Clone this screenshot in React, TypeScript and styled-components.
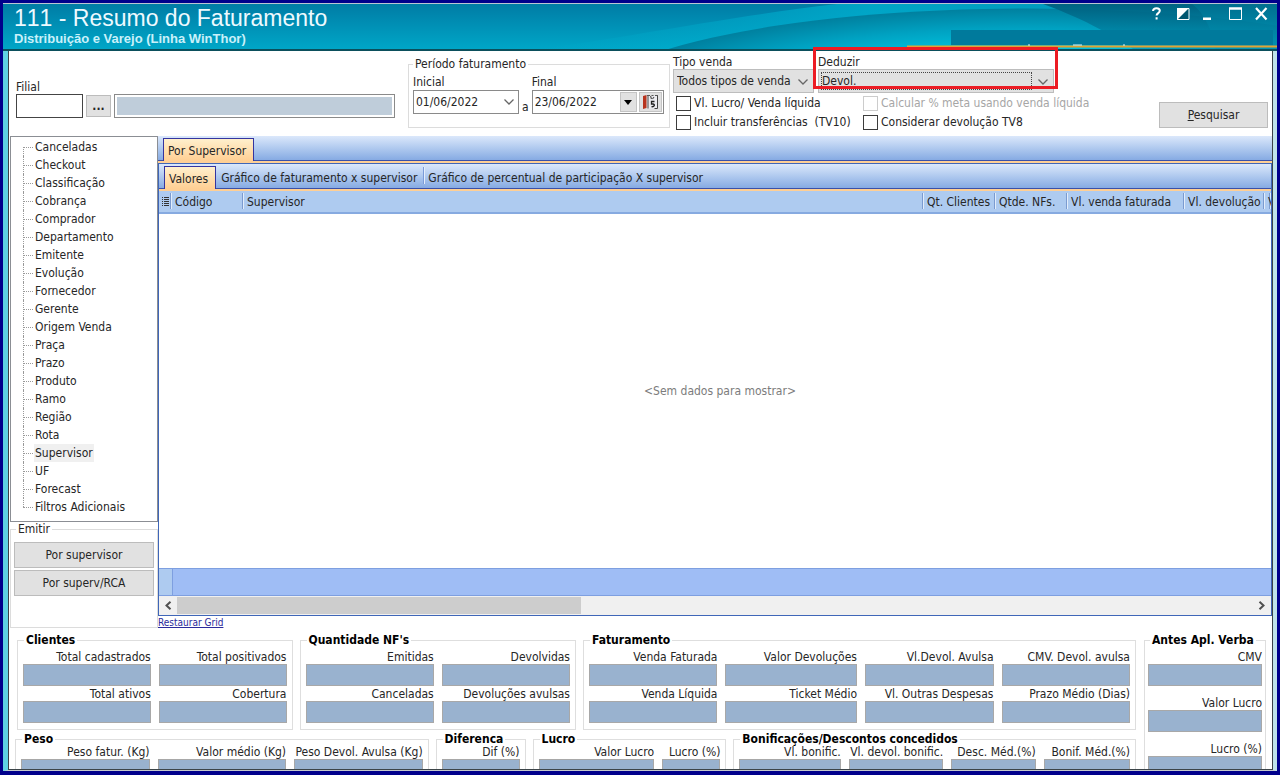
import React from "react";
import styled, { createGlobalStyle, css } from "styled-components";

const GlobalStyle = createGlobalStyle`
  *, *::before, *::after { box-sizing: border-box; }
  html, body, #root { height: 100%; }
  body {
    margin: 0;
    background: #00008b;
    color: #262626;
    font-family: "DejaVu Sans Condensed", "DejaVu Sans", "Noto Sans", sans-serif;
    font-size: 12px;
    line-height: 14px;
  }
  button, input, select { font: inherit; color: inherit; border-radius: 0; }
  fieldset { min-width: 0; margin: 0; }
`;

const Frame = styled.div`
  display: flex;
  flex-direction: column;
  height: 100vh;
  min-height: 600px;
  border: 3px solid #00008b;
  border-bottom-width: 4px;
  overflow: hidden;
`;

const Header = styled.header`
  position: relative;
  display: flex;
  justify-content: space-between;
  flex: none;
  height: 48px;
  padding: 2px 6px 0 11px;
  border-top: 1px solid #b9c6d2;
  border-bottom: 2px solid #0b4f5c;
  background: linear-gradient(#007ca5, #00a6c7);
  color: #fff;
  font-family: "Liberation Sans", Arial, sans-serif;
`;

const Waves = styled.svg`
  position: absolute;
  top: 0;
  right: 0;
  width: 740px;
  height: 45px;
`;

const Titles = styled.div`
  position: relative;
`;

const Title = styled.h1`
  margin: 0;
  font-size: 23px;
  line-height: 24px;
  font-weight: 400;
  font-kerning: none;
  color: #eefaff;
`;

const Subtitle = styled.p`
  margin: 2px 0 0;
  font-size: 13px;
  line-height: 14px;
  font-weight: 700;
  color: #c9f1fa;
`;

const WindowButtons = styled.div`
  position: relative;
  display: flex;
  align-self: flex-start;
  gap: 8px;
`;

const WindowButton = styled.button`
  width: 18px;
  height: 18px;
  padding: 0;
  border: 0;
  background: none;
  color: #fff;

  svg { display: block; width: 18px; height: 18px; }
`;

const Client = styled.main`
  position: relative;
  display: flex;
  flex-direction: column;
  flex: 1;
  min-height: 0;
  border-style: solid;
  border-width: 0 4px 1px 5px;
  border-color: #c8e8ee #bfe3ea #c4c8cc #5fd3e4;
  background: #fff;
`;

const Surface = styled.div`
  display: flex;
  flex-direction: column;
  flex: 1;
  min-height: 0;
  border: 1px solid #3c4448;
  border-top: 0;
`;

const Toolbar = styled.form`
  display: flex;
  align-items: flex-start;
  flex: none;
  min-height: 85px;
  padding: 4px 4px 0 7px;
`;

const Branch = styled.div`
  display: flex;
  flex-direction: column;
  padding-top: 25px;
  margin-right: 13px;
`;

const BranchRow = styled.div`
  display: flex;
  align-items: center;
  gap: 3px;
`;

const CodeInput = styled.input`
  width: 67px;
  height: 24px;
  padding: 0 3px;
  border: 1px solid #444;
  background: #fff;
`;

const MoreButton = styled.button`
  width: 25px;
  height: 22px;
  padding: 0;
  border: 1px solid #bcbcbc;
  background: #e1e1e1;
  font-weight: 700;
  line-height: 14px;
`;

const NameInput = styled.input`
  width: 281px;
  height: 24px;
  padding: 0 3px;
  border: 1px solid #8a8a8a;
  background: #bfcdda;
  box-shadow: inset 0 0 0 2px #fff;
`;

const Period = styled.fieldset`
  flex: none;
  width: 262px;
  height: 71px;
  margin: 2px 3px 0 0;
  padding: 4px 5px 0 4px;
  border: 1px solid #dcdcdc;

  legend { padding: 0 2px; }
`;

const PeriodRow = styled.div`
  display: flex;
  align-items: flex-end;
  gap: 3px;
`;

const PeriodField = styled.div`
  display: flex;
  flex-direction: column;
  gap: 1px;
`;

const DateBox = styled.div<{ $width: number }>`
  display: flex;
  align-items: center;
  gap: 2px;
  width: ${(p) => p.$width}px;
  height: 24px;
  padding: 0 1px 0 2px;
  border: 1px solid #8a8a8a;
  background: #fff;

  input {
    flex: 1;
    min-width: 0;
    padding: 0;
    border: 0;
    background: none;
  }
`;

const DateButton = styled.button<{ $flat?: boolean; $wide?: boolean }>`
  flex: none;
  width: ${(p) => (p.$wide ? 23 : 17)}px;
  height: 20px;
  padding: 0;
  border: ${(p) => (p.$flat ? "0" : "1px solid #c4c4c4")};
  background: ${(p) => (p.$flat ? "none" : "#e1e1e1")};

  svg { display: block; margin: 0 auto; }
`;

const Options = styled.div`
  display: flex;
  flex-direction: column;
`;

const Combos = styled.div`
  display: flex;
  gap: 4px;
`;

const ComboGroup = styled.div<{ $width: number }>`
  position: relative;
  display: flex;
  flex-direction: column;
  width: ${(p) => p.$width}px;
`;

const ComboBox = styled.div`
  position: relative;
  height: 24px;
  padding: 3px 22px 3px 3px;
  border: 1px solid #bdbdbd;
  background: #e1e1e1;

  svg {
    position: absolute;
    top: 8px;
    right: 4px;
    pointer-events: none;
  }
`;

const Select = styled.select<{ $focused?: boolean }>`
  display: block;
  width: 100%;
  height: 16px;
  padding: 0;
  border: 0;
  appearance: none;
  background: none;
  outline: ${(p) => (p.$focused ? "1px dotted #444" : "none")};
`;

const Highlight = styled.span`
  position: absolute;
  top: -8px;
  left: -5px;
  right: -4px;
  height: 42px;
  border: 3px solid #ec1c24;
  pointer-events: none;
  z-index: 2;
`;

const Checks = styled.div`
  display: grid;
  grid-template-columns: 187px auto;
  row-gap: 3px;
  padding: 2px 0 0 3px;
`;

const Check = styled.label<{ $disabled?: boolean }>`
  display: flex;
  align-items: center;
  gap: 3px;
  height: 16px;
  white-space: pre;
  color: ${(p) => (p.$disabled ? "#a6a6a6" : "inherit")};

  input {
    appearance: none;
    width: 15px;
    height: 15px;
    margin: 0;
    border: 1px solid ${(p) => (p.$disabled ? "#ccc" : "#3c3c3c")};
    background: #fff;
  }
  input:checked { background: #3c3c3c; }
`;

const PushButton = styled.button`
  height: 26px;
  padding: 0 26px;
  border: 1px solid #bcbcbc;
  background: #e1e1e1;
`;

const SearchButton = styled(PushButton)`
  width: 109px;
  margin: 47px 0 0 auto;
`;

const Workspace = styled.div`
  display: flex;
  flex: 1;
  min-height: 0;
`;

const Sidebar = styled.aside`
  display: flex;
  flex-direction: column;
  flex: none;
  width: 149px;
  padding-left: 1px;
`;

const Tree = styled.ul`
  flex: none;
  margin: 0;
  padding: 1px 0 5px 12px;
  list-style: none;
  border: 1px solid #8b8e94;
`;

const TreeItem = styled.li`
  position: relative;
  display: flex;
  align-items: center;
  height: 18px;

  &::before {
    content: "";
    width: 10px;
    margin-right: 1px;
    border-top: 1px dotted #999;
  }
  &::after {
    content: "";
    position: absolute;
    top: 0;
    bottom: 0;
    left: 0;
    border-left: 1px dotted #999;
  }
  &:first-child::after { top: 9px; }
  &:last-child::after { bottom: 9px; }
`;

const TreeLink = styled.a<{ $selected?: boolean }>`
  padding: 2px 1px;
  color: inherit;
  text-decoration: none;
  white-space: nowrap;
  background: ${(p) => (p.$selected ? "#f0f0f0" : "none")};
`;

const Emit = styled.fieldset`
  display: flex;
  flex-direction: column;
  gap: 2px;
  height: 106px;
  padding: 6px 3px 0;
  border: 1px solid #dcdcdc;

  legend { padding: 0 2px; margin-left: 2px; }
`;

const Content = styled.section`
  display: flex;
  flex-direction: column;
  flex: 1;
  min-width: 0;
`;

const TabStrip = styled.div`
  display: flex;
  align-items: flex-end;
  flex: none;
  height: 25px;
  padding-left: 5px;
  border-bottom: 1px solid #3a50a8;
  background: linear-gradient(#dbe8fb, #86abe3);
`;

const OrangeRule = styled.div`
  flex: none;
  height: 2px;
  background: #ffcf95;
`;

const Tab = styled.button<{ $active?: boolean }>`
  position: relative;
  height: 23px;
  padding: 2px 6px 0 5px;
  border: 0;
  background: none;
  white-space: nowrap;

  ${(p) =>
    p.$active
      ? css`
          padding-right: 7px;
          padding-left: 4px;
          margin-bottom: -1px;
          border: 1px solid #3434a0;
          border-bottom: 0;
          background: linear-gradient(#fff0cd, #ffcf93);
        `
      : css`
          & + &::before {
            content: "";
            position: absolute;
            left: 0;
            top: 2px;
            height: 17px;
            border-left: 1px solid #7b9bd8;
            border-right: 1px solid #e4eefc;
          }
        `}
`;

const GridPanel = styled.div`
  display: flex;
  flex-direction: column;
  flex: 1;
  min-height: 0;
  border: 1px solid #3f66b8;
`;

const GridTable = styled.table`
  flex: none;
  width: 100%;
  border-collapse: collapse;
  table-layout: fixed;
  background: #aecbf0;
`;

const HeadCell = styled.th<{ $width?: number }>`
  width: ${(p) => (p.$width ? `${p.$width}px` : "auto")};
  height: 22px;
  padding: 0 0 0 3px;
  border-bottom: 2px solid #86aae0;
  background: linear-gradient(#7b9bd0, #7b9bd0) right 1px top 2px / 1px 16px no-repeat,
    linear-gradient(#e2edfb, #e2edfb) right 0 top 2px / 1px 16px no-repeat;
  font-weight: 400;
  text-align: left;
  white-space: nowrap;
  overflow: hidden;

  svg { display: block; }
`;

const EmptyArea = styled.div`
  display: flex;
  align-items: center;
  justify-content: center;
  flex: 1;
  min-height: 0;
  padding-left: 10px;
  color: #7c7c7c;
`;

const Footer = styled.div`
  flex: none;
  height: 28px;
  border: 1px solid #7e9fe0;
  border-width: 1px 0;
  background: #9fbdf5;

  &::before {
    content: "";
    display: block;
    width: 14px;
    height: 100%;
    border-right: 1px solid #7e9fe0;
    background: #aecbf0;
  }
`;

const ScrollBar = styled.div`
  display: flex;
  align-items: center;
  flex: none;
  height: 19px;
  background: #f0f0f0;
`;

const ScrollButton = styled.button`
  width: 18px;
  height: 17px;
  padding: 0;
  border: 0;
  background: none;

  svg { display: block; margin: 0 auto; }
`;

const ScrollTrack = styled.div`
  display: grid;
  grid-template-columns: 3fr 5fr;
  flex: 1;
  height: 17px;

  &::before {
    content: "";
    background: #cdcdcd;
  }
`;

const RestoreLink = styled.a`
  flex: none;
  align-self: flex-start;
  height: 14px;
  font-size: 10px;
  line-height: 13px;
  color: #2b2b9c;
`;

const Summary = styled.section`
  display: grid;
  grid-template-columns: minmax(0, 1121fr) minmax(0, 122fr);
  column-gap: 8px;
  flex: none;
  height: 139px;
  padding: 3px 6px 0;
  overflow: hidden;
`;

const SummaryMain = styled.div`
  display: flex;
  flex-direction: column;
  gap: 2px;
`;

const SummaryRow = styled.div<{ $columns: string; $indent?: boolean }>`
  display: grid;
  grid-template-columns: ${(p) => p.$columns};
  column-gap: 7px;
  padding-left: ${(p) => (p.$indent ? 2 : 0)}px;
`;

const Group = styled.fieldset<{ $columns: string; $rowGap?: number; $dense?: boolean; $narrow?: boolean }>`
  display: grid;
  grid-template-columns: ${(p) => p.$columns};
  gap: ${(p) => p.$rowGap ?? 1}px 8px;
  align-content: start;
  padding: ${(p) => (p.$dense ? 0 : 3)}px ${(p) => (p.$narrow ? 3 : 5)}px 6px;
  border: 1px solid #dedede;

  legend {
    padding: 0 2px;
    margin-left: ${(p) => (p.$narrow ? 2 : 1)}px;
    color: #000;
    font-weight: 700;
    line-height: 14px;
    white-space: nowrap;
  }
`;

const Field = styled.label<{ $dense?: boolean }>`
  display: flex;
  flex-direction: column;
  align-items: flex-end;
  min-width: 0;
  line-height: ${(p) => (p.$dense ? 13 : 14)}px;
  white-space: nowrap;

  input {
    width: 100%;
    height: 22px;
    padding: 0 3px;
    border: 1px solid #a8a8a8;
    background: #99b2cf;
    text-align: right;
  }
`;

const Chevron = () => (
  <svg width="12" height="8" viewBox="0 0 12 8" fill="none" stroke="#666" strokeWidth="1.3">
    <path d="M1.5 1.5 6 6l4.5-4.5" />
  </svg>
);

const menu = [
  "Canceladas", "Checkout", "Classificação", "Cobrança", "Comprador", "Departamento",
  "Emitente", "Evolução", "Fornecedor", "Gerente", "Origem Venda", "Praça", "Prazo",
  "Produto", "Ramo", "Região", "Rota", "Supervisor", "UF", "Forecast", "Filtros Adicionais",
];

const columns: { title: string; width?: number }[] = [
  { title: "Código", width: 72 },
  { title: "Supervisor" },
  { title: "Qt. Clientes", width: 72 },
  { title: "Qtde. NFs.", width: 72 },
  { title: "Vl. venda faturada", width: 117 },
  { title: "Vl. devolução", width: 80 },
  { title: "V", width: 6 },
];

type GroupProps = {
  title: string;
  fields: string[];
  columns: string;
  rowGap?: number;
  dense?: boolean;
  narrow?: boolean;
};

const SummaryGroup = ({ title, fields, columns: cols, rowGap, dense, narrow }: GroupProps) => (
  <Group $columns={cols} $rowGap={rowGap} $dense={dense} $narrow={narrow}>
    <legend>{title}</legend>
    {fields.map((name) => (
      <Field key={name} $dense={dense}>
        {name}
        <input readOnly />
      </Field>
    ))}
  </Group>
);

const fr = (...parts: number[]) => parts.map((n) => `minmax(0, ${n}fr)`).join(" ");

export default function App() {
  return (
    <>
      <GlobalStyle />
      <Frame>
        <Header>
          <Waves viewBox="0 0 740 45" aria-hidden="true">
            <defs>
              <linearGradient id="glow" x1="0" y1="0" x2="1" y2="0">
                <stop offset="0" stopColor="#00b4d3" stopOpacity="0" />
                <stop offset="0.45" stopColor="#00b4d3" stopOpacity="0.7" />
                <stop offset="1" stopColor="#00a0c0" stopOpacity="0.6" />
              </linearGradient>
              <radialGradient
                id="swell"
                gradientUnits="userSpaceOnUse"
                cx="0"
                cy="0"
                r="1"
                gradientTransform="translate(490 104.5) scale(446 100)"
              >
                <stop offset="0.6" stopColor="#00c0dc" />
                <stop offset="0.8" stopColor="#00a2c2" />
                <stop offset="1" stopColor="#00809f" />
              </radialGradient>
              <linearGradient id="wedge" x1="0" y1="0" x2="0" y2="1">
                <stop offset="0" stopColor="#005f7e" stopOpacity="0.95" />
                <stop offset="1" stopColor="#008fb0" stopOpacity="0.6" />
              </linearGradient>
            </defs>
            <path d="M0 45C90 34 180 14 300 0H740V45Z" fill="url(#glow)" />
            <ellipse cx="490" cy="104.5" rx="446" ry="100" fill="url(#swell)" />
            <path d="M506 0H740V45H596C580 34 550 16 506 0Z" fill="url(#wedge)" />
            <path d="M655 0h85v45h-62C676 28 668 10 655 0Z" fill="#0090ae" opacity="0.3" />
            <path d="M414 26h322v15H414Z" fill="#007a9c" />
            <path d="M370 41.5h370v2H370Z" fill="#e2a233" />
            <path d="M491 40.500h2v1h-2Zm45 0h9v1h-9Zm50 0h2v1h-2Z" fill="#e8f4f6" />
          </Waves>
          <Titles>
            <Title>111 - Resumo do Faturamento</Title>
            <Subtitle>Distribuição e Varejo (Linha WinThor)</Subtitle>
          </Titles>
          <WindowButtons>
            <WindowButton aria-label="Ajuda">
              <svg viewBox="0 0 18 18" fill="none" stroke="#fff" strokeWidth="2">
                <path d="M4 5C4.200 3 5.500 2.200 7.500 2.200c2 0 3.300 1 3.300 2.600 0 2.300-3.200 2.300-3.200 4.800M7.600 11.200v2.200" />
              </svg>
            </WindowButton>
            <WindowButton aria-label="Alternar">
              <svg viewBox="0 0 18 18">
                <path d="M2.500 2.500h11.500v11h-11.500Z" fill="#00566f" stroke="#fff" />
                <path d="M2 14V2h12Z" fill="#fff" />
              </svg>
            </WindowButton>
            <WindowButton aria-label="Minimizar">
              <svg viewBox="0 0 18 18"><path d="M2 11.500h8V14H2Z" fill="#fff" /></svg>
            </WindowButton>
            <WindowButton aria-label="Maximizar">
              <svg viewBox="0 0 18 18" fill="none" stroke="#fff">
                <path d="M2.500 3v10.500h12V3" /><path d="M2 2.500h13" strokeWidth="2.500" />
              </svg>
            </WindowButton>
            <WindowButton aria-label="Fechar">
              <svg viewBox="0 0 18 18" fill="none" stroke="#fff" strokeWidth="2.200">
                <path d="m3 2 10.500 11.500M13.500 2 3 13.500" />
              </svg>
            </WindowButton>
          </WindowButtons>
        </Header>

        <Client>
          <Surface>
            <Toolbar onSubmit={(e) => e.preventDefault()}>
              <Branch>
                <label htmlFor="filial">Filial</label>
                <BranchRow>
                  <CodeInput id="filial" />
                  <MoreButton type="button">...</MoreButton>
                  <NameInput aria-label="Nome da filial" readOnly />
                </BranchRow>
              </Branch>

              <Period>
                <legend>Período faturamento</legend>
                <PeriodRow>
                  <PeriodField>
                    <label htmlFor="inicial">Inicial</label>
                    <DateBox $width={106}>
                      <input id="inicial" defaultValue="01/06/2022" />
                      <DateButton type="button" $flat aria-label="Abrir data inicial"><Chevron /></DateButton>
                    </DateBox>
                  </PeriodField>
                  <span>a</span>
                  <PeriodField>
                    <label htmlFor="final">Final</label>
                    <DateBox $width={132}>
                      <input id="final" defaultValue="23/06/2022" />
                      <DateButton type="button" aria-label="Abrir data final">
                        <svg width="8" height="5" viewBox="0 0 8 5"><path d="M0 0h8L4 5Z" fill="#000" /></svg>
                      </DateButton>
                      <DateButton type="button" $wide aria-label="Calendário">
                        <svg width="17" height="16" viewBox="0 0 17 16">
                          <path d="M1 2 4.500 1v13L1 15Z" fill="#b8341f" />
                          <path d="M5 2h10.500v12.500H5Z" fill="#ececf0" />
                          <path d="M6 1v13.500M15.500 2v12.500h-3" fill="none" stroke="#444" />
                          <path d="M5 1.500h3M9.500 1.500h2M13 1.500h3M8.500 2l1 3M12 3l-1.500 2" fill="none" stroke="#555" strokeWidth="1.200" />
                          <path d="M12.500 7.500H9.500V10h1.500c2 0 2 3-1.500 2.700" fill="none" stroke="#222" strokeWidth="1.300" />
                        </svg>
                      </DateButton>
                    </DateBox>
                  </PeriodField>
                </PeriodRow>
              </Period>

              <Options>
                <Combos>
                  <ComboGroup $width={141}>
                    <label htmlFor="tipo">Tipo venda</label>
                    <ComboBox>
                      <Select id="tipo"><option>Todos tipos de venda</option></Select>
                      <Chevron />
                    </ComboBox>
                  </ComboGroup>
                  <ComboGroup $width={236}>
                    <label htmlFor="deduzir">Deduzir</label>
                    <ComboBox>
                      <Select id="deduzir" $focused><option>Devol.</option></Select>
                      <Chevron />
                    </ComboBox>
                    <Highlight />
                  </ComboGroup>
                </Combos>
                <Checks>
                  <Check><input type="checkbox" />Vl. Lucro/ Venda líquida</Check>
                  <Check $disabled><input type="checkbox" disabled />Calcular % meta usando venda líquida</Check>
                  <Check><input type="checkbox" />{"Incluir transferências  (TV10)"}</Check>
                  <Check><input type="checkbox" />Considerar devolução TV8</Check>
                </Checks>
              </Options>

              <SearchButton type="submit"><u>P</u>esquisar</SearchButton>
            </Toolbar>

            <Workspace>
              <Sidebar>
                <Tree>
                  {menu.map((item) => (
                    <TreeItem key={item}>
                      <TreeLink href="#" $selected={item === "Supervisor"}>{item}</TreeLink>
                    </TreeItem>
                  ))}
                </Tree>
                <Emit>
                  <legend>Emitir</legend>
                  <PushButton type="button">Por supervisor</PushButton>
                  <PushButton type="button">Por superv/RCA</PushButton>
                </Emit>
              </Sidebar>

              <Content>
                <TabStrip>
                  <Tab $active>Por Supervisor</Tab>
                </TabStrip>
                <OrangeRule />
                <GridPanel>
                  <TabStrip>
                    <Tab $active>Valores</Tab>
                    <Tab>Gráfico de faturamento x supervisor</Tab>
                    <Tab>Gráfico de percentual de participação X supervisor</Tab>
                  </TabStrip>
                  <OrangeRule />
                  <GridTable>
                    <thead>
                      <tr>
                        <HeadCell $width={13} aria-label="Colunas">
                          <svg width="8" height="10" viewBox="0 0 8 10" stroke="#333">
                            <path d="M0 .5h1M0 2.500h1M0 4.500h1M0 6.500h1M0 8.500h1M2 .5h5M2 2.500h5M2 4.500h5M2 6.500h5M2 8.500h5" />
                          </svg>
                        </HeadCell>
                        {columns.map((c) => (
                          <HeadCell key={c.title} $width={c.width}>{c.title}</HeadCell>
                        ))}
                      </tr>
                    </thead>
                  </GridTable>
                  <EmptyArea>&lt;Sem dados para mostrar&gt;</EmptyArea>
                  <Footer />
                  <ScrollBar>
                    <ScrollButton aria-label="Rolar para a esquerda">
                      <svg width="8" height="9" viewBox="0 0 8 9" fill="none" stroke="#505050" strokeWidth="2">
                        <path d="M6.500 .8 2.500 4.500l4 3.700" />
                      </svg>
                    </ScrollButton>
                    <ScrollTrack />
                    <ScrollButton aria-label="Rolar para a direita">
                      <svg width="8" height="9" viewBox="0 0 8 9" fill="none" stroke="#505050" strokeWidth="2">
                        <path d="M1.500 .8 5.500 4.500l-4 3.700" />
                      </svg>
                    </ScrollButton>
                  </ScrollBar>
                </GridPanel>
                <RestoreLink href="#">Restaurar Grid</RestoreLink>
              </Content>
            </Workspace>

            <Summary>
              <SummaryMain>
                <SummaryRow $indent $columns={fr(276, 277, 554)}>
                  <SummaryGroup
                    title="Clientes"
                    columns={fr(1, 1)}
                    fields={["Total cadastrados", "Total positivados", "Total ativos", "Cobertura"]}
                  />
                  <SummaryGroup
                    title="Quantidade NF's"
                    columns={fr(1, 1)}
                    fields={["Emitidas", "Devolvidas", "Canceladas", "Devoluções avulsas"]}
                  />
                  <SummaryGroup
                    title="Faturamento"
                    columns={fr(128, 131, 128, 128)}
                    fields={[
                      "Venda Faturada", "Valor Devoluções", "Vl.Devol. Avulsa", "CMV. Devol. avulsa",
                      "Venda Líquida", "Ticket Médio", "Vl. Outras Despesas", "Prazo Médio (Dias)",
                    ]}
                  />
                </SummaryRow>
                <SummaryRow $columns={fr(414, 90, 194, 403)}>
                  <SummaryGroup
                    dense
                    title="Peso"
                    columns={fr(1, 1, 1)}
                    fields={["Peso fatur. (Kg)", "Valor médio (Kg)", "Peso Devol. Avulsa (Kg)"]}
                  />
                  <SummaryGroup dense title="Diferenca" columns={fr(1)} fields={["Dif (%)"]} />
                  <SummaryGroup
                    dense
                    title="Lucro"
                    columns={fr(113, 57)}
                    fields={["Valor Lucro", "Lucro (%)"]}
                  />
                  <SummaryGroup
                    dense
                    title="Bonificações/Descontos concedidos"
                    columns={fr(101, 94, 84, 86)}
                    fields={["Vl. bonific.", "Vl. devol. bonific.", "Desc. Méd.(%)", "Bonif. Méd.(%)"]}
                  />
                </SummaryRow>
              </SummaryMain>
              <SummaryGroup
                narrow
                title="Antes Apl. Verba"
                columns={fr(1)}
                rowGap={10}
                fields={["CMV", "Valor Lucro", "Lucro (%)"]}
              />
            </Summary>
          </Surface>
        </Client>
      </Frame>
    </>
  );
}
